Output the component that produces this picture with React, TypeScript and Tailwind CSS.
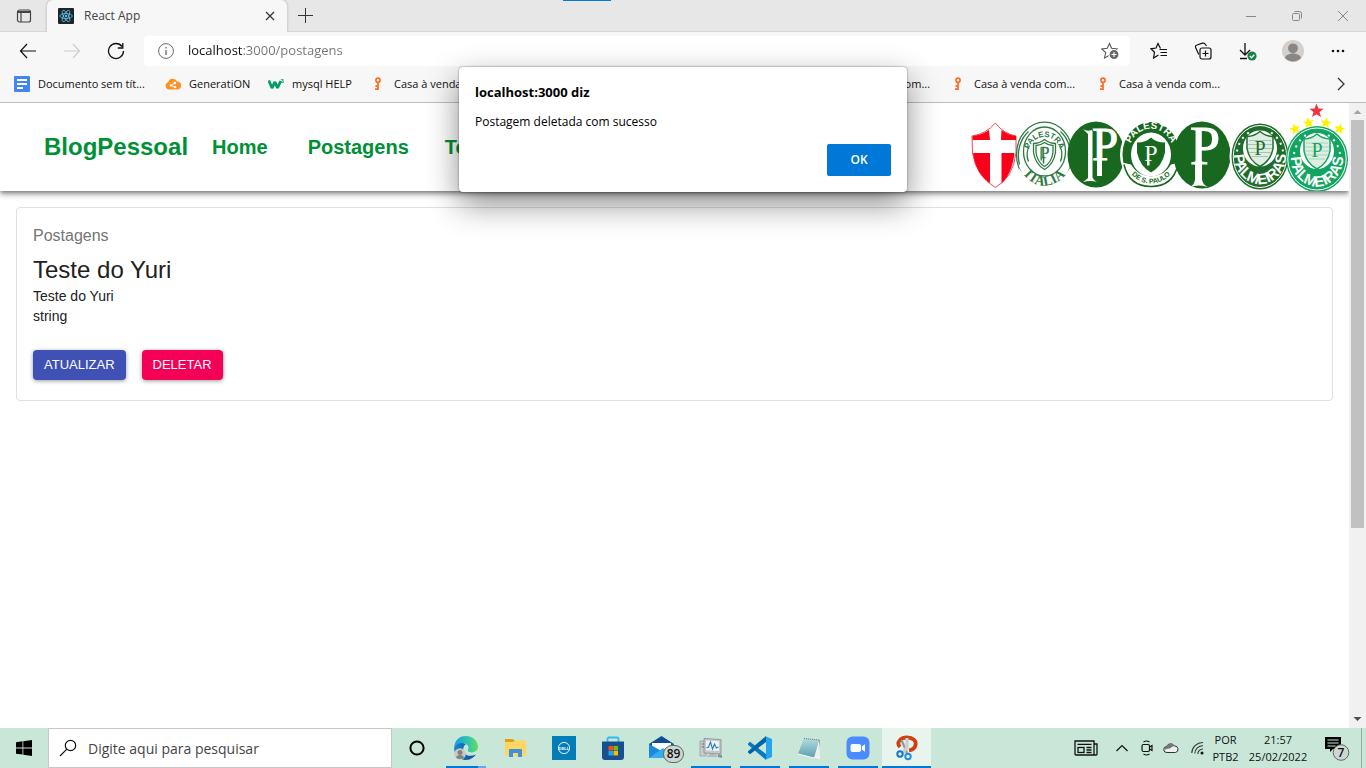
import React from "react";

const ui = "font-['Open_Sans','Noto_Sans',sans-serif]";

function Key() {
  return (
    <svg className="size-4 shrink-0" viewBox="0 0 16 16" fill="none" stroke="#ff6a1f" aria-hidden="true">
      <circle cx="8" cy="4.2" r="2.1" strokeWidth="1.6" />
      <path d="M8 6.4V14M8 10.2H5.4M8 13.2H5" strokeWidth="1.7" />
    </svg>
  );
}

function DocsIcon() {
  return (
    <svg className="size-4 shrink-0" viewBox="0 0 16 16" aria-hidden="true">
      <rect width="16" height="16" rx="1" fill="#4285f4" />
      <path d="M3 4h10M3 8h10M3 12h6" stroke="#fff" strokeWidth="1.8" />
    </svg>
  );
}

function CloudIcon() {
  return (
    <svg className="size-4 shrink-0" viewBox="0 0 16 16" aria-hidden="true">
      <path d="M4 13.5a3.7 3.7 0 0 1-.8-7.2A4.7 4.7 0 0 1 12 5.5a4 4 0 0 1 0 8z" fill="#ff9124" />
      <circle cx="6" cy="9.5" r="1.3" fill="#fff" />
      <circle cx="9.8" cy="7" r="1.3" fill="#fff" />
      <circle cx="10" cy="11" r="1.3" fill="#fff" />
      <path d="M6 9.5L9.8 7M6 9.5l4 1.5" stroke="#fff" strokeWidth=".8" />
    </svg>
  );
}

function W3Icon() {
  return (
    <svg className="size-4 shrink-0" viewBox="0 0 16 16" aria-hidden="true">
      <path d="M.8 4.5L4 12l3-6 2.5 6 3.2-7" fill="none" stroke="#079b69" strokeWidth="2.8" strokeLinejoin="bevel" />
      <text x="12.5" y="6.5" fontSize="6" fontWeight="700" fontFamily="Liberation Sans" fill="#079b69">3</text>
    </svg>
  );
}

const bookmarks = [
  { label: "Documento sem tít...", icon: <DocsIcon />, width: "w-[151px]" },
  { label: "GeneratiON", icon: <CloudIcon />, width: "w-[103px]" },
  { label: "mysql HELP", icon: <W3Icon />, width: "w-[102px]" },
  ...Array.from({ length: 6 }, () => ({ label: "Casa à venda com...", icon: <Key />, width: "w-[145px]" })),
];

function TabStrip() {
  return (
    <div className="relative flex h-8 shrink-0 items-stretch border-b border-[#d6d6d6] bg-[#e7e7e7]">
      <button aria-label="Guias" className="flex w-[47px] items-center justify-center">
        <svg width="16" height="16" viewBox="0 0 16 16" fill="none" stroke="#444" strokeWidth="1.2">
          <rect x="1.5" y="2" width="13" height="12" rx="2" />
          <path d="M1.5 4h13" strokeWidth="2" />
          <path d="M5 4v10" />
        </svg>
      </button>
      <div className="-mb-px flex w-[240px] items-center rounded-t-md bg-[#f7f7f7] pl-[11px] pr-2 shadow-[0_0_3px_rgba(0,0,0,0.25)] [clip-path:inset(-4px_-4px_0_-4px)]">
        <svg width="16" height="16" viewBox="0 0 16 16" fill="none" stroke="#61dafb" strokeWidth=".7" aria-hidden="true">
          <rect width="16" height="16" rx="1" fill="#20232a" stroke="none" />
          <ellipse cx="8" cy="8" rx="6.3" ry="2.5" />
          <ellipse cx="8" cy="8" rx="6.3" ry="2.5" transform="rotate(60 8 8)" />
          <ellipse cx="8" cy="8" rx="6.3" ry="2.5" transform="rotate(120 8 8)" />
          <circle cx="8" cy="8" r=".9" fill="#61dafb" />
        </svg>
        <span className="ml-2.5 flex-1 text-[12px] text-[#444]">React App</span>
        <button aria-label="Fechar guia" className="flex size-[18px] items-center justify-center">
          <svg width="10" height="10" viewBox="0 0 10 10" stroke="#333" strokeWidth="1.2">
            <path d="M1 1l8 8M9 1L1 9" />
          </svg>
        </button>
      </div>
      <button aria-label="Nova guia" className="flex w-9 items-center justify-center">
        <svg width="15" height="15" viewBox="0 0 15 15" stroke="#333" strokeWidth="1">
          <path d="M7.5 0v15M0 7.5h15" />
        </svg>
      </button>
      <div className="flex-1" />
      <button aria-label="Minimizar" className="flex w-[46px] items-center justify-center">
        <svg width="10" height="10" viewBox="0 0 10 10" stroke="#888"><path d="M0 5.5h10" /></svg>
      </button>
      <button aria-label="Restaurar" className="flex w-[46px] items-center justify-center">
        <svg width="10" height="10" viewBox="0 0 10 10" fill="none" stroke="#888">
          <rect x=".5" y="2.5" width="7" height="7" rx="1" />
          <path d="M2.5 .5h5a2 2 0 0 1 2 2v5" />
        </svg>
      </button>
      <button aria-label="Fechar" className="flex w-[46px] items-center justify-center">
        <svg width="10" height="10" viewBox="0 0 10 10" stroke="#888"><path d="M0 0l10 10M10 0L0 10" /></svg>
      </button>
      <div className="absolute left-1/2 top-0 h-px w-12 -translate-x-[120px] bg-[#0078d7]" />
    </div>
  );
}

function ToolButton({ label, className = "w-[45px]", children }: { label: string; className?: string; children: React.ReactNode }) {
  return (
    <button aria-label={label} className={`flex shrink-0 items-center justify-center ${className}`}>
      {children}
    </button>
  );
}

function Toolbar() {
  return (
    <div className="flex h-[38px] shrink-0 items-stretch bg-[#f7f7f7] px-1.5">
      <ToolButton label="Voltar" className="w-11">
        <svg width="18" height="16" viewBox="0 0 18 16" fill="none" stroke="#111" strokeWidth="1.2"><path d="M17 8H1.5M8 1L1.500 8 8 15" /></svg>
      </ToolButton>
      <ToolButton label="Avançar" className="w-11">
        <svg width="18" height="16" viewBox="0 0 18 16" fill="none" stroke="#cdcdcd" strokeWidth="1.2"><path d="M1 8h15.5M10 1l6.5 7-6.5 7" /></svg>
      </ToolButton>
      <ToolButton label="Atualizar página" className="w-11">
        <svg width="18" height="18" viewBox="0 0 18 18" fill="none" stroke="#111" strokeWidth="1.3"><path d="M16.5 9A7.500 7.500 0 1 1 15 4.500M15.800 1v5h-5" /></svg>
      </ToolButton>
      <div className="mx-1.5 my-1 flex min-w-0 flex-1 items-center rounded bg-white pl-3.5 pr-2.5">
        <svg width="16" height="16" viewBox="0 0 16 16" fill="none" stroke="#6b6b6b" aria-hidden="true">
          <circle cx="8" cy="8" r="7.400" /><path d="M8 7v5M8 4v1.500" strokeWidth="1.300" />
        </svg>
        <input
          aria-label="Endereço"
          defaultValue="localhost:3000/postagens"
          className="ml-3.5 min-w-0 flex-1 bg-linear-to-r from-[#111] from-[55px] to-[#737373] to-[55px] bg-clip-text text-[13px] text-transparent outline-none"
        />
        <button aria-label="Adicionar aos favoritos">
          <svg width="19" height="18" viewBox="0 0 19 18" fill="none" stroke="#555" strokeWidth="1.1">
            <path d="M8.500 1.500l2.100 4.800 5.400.6-4 3.600 1.100 5.500-4.600-2.700L3.500 16l1.200-5.500-4-3.600 5.500-.6z" />
            <circle cx="13" cy="12.500" r="5" fill="#666" stroke="#fff" />
            <path d="M10.500 12.500h5M13 10v5" stroke="#fff" />
          </svg>
        </button>
      </div>
      <ToolButton label="Favoritos">
        <svg width="18" height="18" viewBox="0 0 18 18" fill="none" stroke="#111" strokeWidth="1.2">
          <path d="M10.500 6.500L8 1.500 6 6l-5 .8 3.500 3.400L3.600 16 8.500 13M9.500 7.500H17M10.500 10.500H17M10.500 13.500H17" />
        </svg>
      </ToolButton>
      <ToolButton label="Coleções" className="w-11">
        <svg width="18" height="18" viewBox="0 0 18 18" fill="none" stroke="#111" strokeWidth="1.2">
          <rect x="6" y="6" width="11" height="11" rx="2" />
          <path d="M11.500 8.500v6M8.500 11.500h6M4.800 12.500L1.600 5.500Q1 3.500 3 3L8.500 1.200Q10.500.8 11.500 2.500L12.500 4" />
        </svg>
      </ToolButton>
      <ToolButton label="Downloads">
        <svg width="18" height="20" viewBox="0 0 18 20" fill="none" stroke="#111" strokeWidth="1.3">
          <path d="M6 2v12M1 9l5 5 5-5M1 17.500h7" />
          <circle cx="13" cy="15" r="4.600" fill="#168442" stroke="none" />
          <path d="M10.800 15l1.700 1.700 2.800-3" stroke="#fff" />
        </svg>
      </ToolButton>
      <ToolButton label="Perfil">
        <svg width="22" height="22" viewBox="0 0 22 22">
          <circle cx="11" cy="11" r="11" fill="#d3d0cd" />
          <circle cx="11" cy="8.300" r="4.900" fill="#8a8684" />
          <path d="M3 18c1-6 15-6 16 0a11 11 0 0 1-16 0z" fill="#8a8684" />
        </svg>
      </ToolButton>
      <ToolButton label="Mais">
        <svg width="14" height="4" viewBox="0 0 14 4" fill="#111"><circle cx="2" cy="2" r="1.300" /><circle cx="7" cy="2" r="1.300" /><circle cx="12" cy="2" r="1.300" /></svg>
      </ToolButton>
    </div>
  );
}

function BookmarkBar() {
  return (
    <div className="flex shrink-0 items-center border-b border-[#bdbdbd] bg-[#f7f7f7] pb-1 pl-3.5 pr-[21px]">
      <div className="flex h-7 min-w-0 flex-1 items-center overflow-hidden">
        {bookmarks.map((b, i) => (
          <a key={i} href="#" className={`flex shrink-0 items-center gap-2 whitespace-nowrap text-[11px] text-[#111] ${b.width}`}>
            {b.icon}
            {b.label}
          </a>
        ))}
      </div>
      <button aria-label="Mais favoritos">
        <svg width="8" height="14" viewBox="0 0 8 14" fill="none" stroke="#333" strokeWidth="1.3"><path d="M1 1l6 6-6 6" /></svg>
      </button>
    </div>
  );
}

const starPoints = "0,-1 .26,-.33 .95,-.31 .4,.13 .59,.81 0,.42 -.59,.81 -.4,.13 -.95,-.31 -.26,-.33";

function PalmeirasBadge({ x, y, r, color, id }: { x: number; y: number; r: number; color: string; id: string }) {
  return (
    <g transform={`translate(${x} ${y})`}>
      <ellipse rx={r} ry="33" fill={color} />
      <ellipse rx={r - 1.8} ry="31" fill="none" stroke="#fff" strokeWidth="1" />
      <ellipse cy="-8" rx="17" ry="18" fill="#fff" />
      <path d="M-13-20Q-6-20 0-25 6-20 13-20V-8Q11 4 0 10-11 4-13-8z" fill="#dfeee2" stroke={color} strokeWidth="1.5" />
      <path d="M-11-16H11M-12-12H12M-12-8H12M-11-4H11M-8 0H8" stroke={color} strokeWidth=".6" opacity=".5" />
      <text y="-2" textAnchor="middle" fontSize="20" fontFamily="Liberation Serif" fill={color}>P</text>
      <path d="M-23-5A25 27 0 0 1-11-24M11-24A25 27 0 0 1 23-5" fill="none" stroke="#fff" strokeWidth="2" strokeDasharray="2 5" />
      <path id={id} d="M-26-1A26 28.500 0 0 0 26-1" fill="none" />
      <text fontSize="15" fontWeight="700" fontFamily="Liberation Sans" fill="#fff" textAnchor="middle">
        <textPath href={`#${id}`} startOffset="50%">PALMEIRAS</textPath>
      </text>
    </g>
  );
}

function ClubBadges() {
  const dark = "#18691f";
  return (
    <svg className="h-[88px] w-[378px] shrink-0" viewBox="0 0 378 88" role="img" aria-label="Escudos do Palmeiras">
      <g>
        <path d="M1 33Q15 31 24.300 20 33 31 45 33V50Q42 75 24.300 84.500 5 73 1.500 50z" fill="#fff" stroke="#fb4557" strokeWidth="1" />
        <path d="M1.500 33Q11 32 18 27L19 37H1.500zM45 33Q37 32 30.500 27L30 37H45zM2 50H19V80Q5 71 2 50zM30.500 50H43.500Q41 71 30.500 80z" fill="#fb0018" />
      </g>
      <g transform="translate(73.500 51.500)">
        <g fill="none" stroke="#2e7a43" strokeWidth="1.3">
          <ellipse rx="28" ry="32.300" fill="#fff" />
          <ellipse cy="-3" rx="21" ry="24.500" />
          <path d="M-25 10A25 30 0 0 1-16-23M25 10A25 30 0 0 0 16-23M-16 7A17 18 0 0 1-15-9M16 7A17 18 0 0 0 15-9" />
          <path d="M-11-11Q-5-11 0-15 5-11 11-11V-2Q9 10 0 15-9 10-11-2z" />
          <path d="M-8.500-9Q-4-9 0-12 4-9 8.500-9V-2Q7 8 0 12-7 8-8.500-2z" />
        </g>
        <text x="-4" y="3" fontSize="16" fontFamily="Liberation Serif" fill="#2e7a43" stroke="#2e7a43" strokeWidth=".4">P</text>
        <rect x="-4" y="-7" width="1.300" height="13" fill="#2e7a43" />
        <rect x="-1.800" y="2" width="1.600" height="7" fill="#2e7a43" />
        <path id="arc-palestra" d="M-16-4A16.500 18 0 0 1 16-4" fill="none" />
        <text fontSize="8" fontWeight="700" fontFamily="Liberation Sans" fill="#2e7a43" textAnchor="middle"><textPath href="#arc-palestra" startOffset="50%">PALESTRA</textPath></text>
        <path d="M-26 13Q-18 27 0 22 18 27 26 13V17Q18 34 0 34-18 34-25 20z" fill="#fff" />
        <path id="arc-italia" d="M-25 15Q-14 31 0 31 14 31 25 15" fill="none" />
        <text fontSize="14" fontWeight="700" fontFamily="Liberation Serif" fill="#2e7a43" textAnchor="middle"><textPath href="#arc-italia" startOffset="50%">ITALIA</textPath></text>
      </g>
      <g>
        <ellipse cx="125" cy="51.500" rx="28.500" ry="33" fill={dark} />
        <g fill="#fff">
          <text x="121" y="57" fontSize="47" fontFamily="Liberation Serif" stroke="#fff" strokeWidth="1">P</text>
          <rect x="126" y="55" width="5" height="18" />
          <rect x="117" y="28" width="4.500" height="49" />
          <path d="M112 26q4 3 9 1v4h-4zM112 79q3-2 5-4h5q1 3 5 4-8-2-15 0z" />
        </g>
      </g>
      <g transform="translate(180 51.500)">
        <ellipse rx="31" ry="34" fill="#fff" />
        <ellipse rx="28.500" ry="32.500" fill={dark} />
        <path d="M-29 8L-20 10Q-14 21 0 22 14 21 20 10L29 8Q28 30 0 34-28 30-29 8z" fill="#fff" />
        <path d="M-27 10Q-22 32 0 32 22 32 27 10" fill="none" stroke={dark} strokeWidth="1.5" />
        <ellipse rx="20" ry="22" fill="#fff" />
        <path d="M-14-12Q-5-12 0-17 5-12 14-12V-2Q11 12 0 18-11 12-14-2z" fill={dark} />
        <text y="6" textAnchor="middle" fontSize="24" fontFamily="Liberation Serif" fill="#fff">P</text>
        <rect x="-4" y="5" width="2.500" height="6" fill="#fff" />
        <path id="arc-palestra-sp" d="M-22-6A22.500 25 0 0 1 22-6" fill="none" />
        <text fontSize="10" fontWeight="700" fontFamily="Liberation Sans" fill="#fff" textAnchor="middle"><textPath href="#arc-palestra-sp" startOffset="50%">PALESTRA</textPath></text>
        <path id="arc-paulo" d="M-24 14Q-14 29 0 29 14 29 24 14" fill="none" />
        <text fontSize="7" fontWeight="700" fontFamily="Liberation Sans" fill={dark} textAnchor="middle"><textPath href="#arc-paulo" startOffset="50%">DE S. PAULO</textPath></text>
      </g>
      <g>
        <ellipse cx="231" cy="52" rx="28.500" ry="33.500" fill={dark} />
        <g fill="#fff">
          <text x="219" y="61" fontSize="54" fontFamily="Liberation Serif" stroke="#fff" strokeWidth="1">P</text>
          <rect x="224" y="58" width="7" height="21" />
          <path d="M219 84q5-3 5-8h7q0 5 6 8-9-3-18 0z" />
        </g>
      </g>
      <ellipse cx="289" cy="53.500" rx="30.500" ry="34" fill="#fff" />
      <PalmeirasBadge x={289} y={53.5} r={28.5} color="#1e6b2b" id="arc-palmeiras-dark" />
      <PalmeirasBadge x={346} y={56} r={31} color="#12a562" id="arc-palmeiras-light" />
      <polygon points={starPoints} transform="translate(345.500 8) scale(7.500)" fill="#f5333f" />
      <g fill="#fff200">
        <polygon points={starPoints} transform="translate(324 26) rotate(-15) scale(6)" />
        <polygon points={starPoints} transform="translate(337.500 20) rotate(-8) scale(6)" />
        <polygon points={starPoints} transform="translate(355 20) rotate(8) scale(6)" />
        <polygon points={starPoints} transform="translate(368.500 26) rotate(15) scale(6)" />
      </g>
    </svg>
  );
}

function BlogPage() {
  return (
    <div className="min-w-0 flex-1 overflow-hidden bg-white font-['Liberation_Sans',Arial,sans-serif]">
      <header className="flex items-center overflow-hidden bg-white pl-11 shadow-[0_2px_4px_-1px_rgba(0,0,0,0.4),0_4px_5px_rgba(0,0,0,0.2),0_1px_10px_rgba(0,0,0,0.15)]">
        <nav className="flex min-w-0 flex-1 items-center whitespace-nowrap text-[20px] font-bold text-[#009036]">
          <a href="#" className="mr-6 text-[24px]">BlogPessoal</a>
          <a href="#" className="mr-10">Home</a>
          <a href="#" className="mr-9">Postagens</a>
          <a href="#">Temas</a>
        </nav>
        <ClubBadges />
      </header>
      <main className="m-4 rounded border border-[#e0e0e0] px-4 pb-5 pt-4 text-[14px] leading-5 text-[#212121]">
        <p className="mb-1.5 text-[16px] leading-6 text-[#757575]">Postagens</p>
        <h2 className="text-[24px] leading-8">Teste do Yuri</h2>
        <p>Teste do Yuri</p>
        <p>string</p>
        <div className="mt-6 flex gap-4 text-[13px] text-white">
          <button className="h-[30px] rounded bg-[#3f51b5] px-[11px] shadow-[0_1px_4px_rgba(0,0,0,0.4)]">ATUALIZAR</button>
          <button className="h-[30px] rounded bg-[#f50057] px-[11px] shadow-[0_1px_4px_rgba(0,0,0,0.4)]">DELETAR</button>
        </div>
      </main>
    </div>
  );
}

function Scrollbar() {
  return (
    <div className="flex w-[17px] shrink-0 flex-col items-center bg-[#f1f1f1]" aria-hidden="true">
      <svg width="17" height="17" viewBox="0 0 17 17" fill="#a3a3a3"><path d="M4.500 11h8l-4-4z" /></svg>
      <div className="w-full flex-1 px-0.5">
        <div className="h-[69%] w-full bg-[#c1c1c1]" />
      </div>
      <svg width="17" height="17" viewBox="0 0 17 17" fill="#505050"><path d="M4.500 6h8l-4 4z" /></svg>
    </div>
  );
}

function AlertDialog() {
  return (
    <div role="alertdialog" aria-labelledby="alert-title" aria-describedby="alert-message" className="absolute left-1/2 top-[67px] flex w-[448px] -translate-x-1/2 flex-col rounded bg-white px-4 pb-4 pt-[15px] leading-5 text-black shadow-[0_0_2px_rgba(0,0,0,0.5),0_12px_32px_rgba(0,0,0,0.45)]">
      <h1 id="alert-title" className="text-[13px] font-bold">localhost:3000 diz</h1>
      <p id="alert-message" className="mt-2.5 text-[12px]">Postagem deletada com sucesso</p>
      <button className="mt-3 h-8 w-16 self-end rounded-xs bg-[#0078d7] text-[12px] font-semibold text-white">OK</button>
    </div>
  );
}

const apps = [
  {
    name: "Cortana", bar: "",
    icon: <svg width="24" height="24" viewBox="0 0 24 24"><circle cx="12" cy="12" r="6.600" fill="none" stroke="#000" strokeWidth="2" /></svg>,
  },
  {
    name: "Microsoft Edge", bar: "w-10 bg-[#0078d7] border-r-8 border-[#64a8e5]",
    icon: (
      <svg width="26" height="26" viewBox="0 0 26 26">
        <defs>
          <linearGradient id="edge-top" x1="0" x2="1"><stop offset="0" stopColor="#189dda" /><stop offset=".6" stopColor="#30c6b0" /><stop offset="1" stopColor="#6ddc50" /></linearGradient>
          <linearGradient id="edge-low" x1="0" x2="1"><stop offset="0" stopColor="#1986d5" /><stop offset="1" stopColor="#0c4d92" /></linearGradient>
        </defs>
        <path d="M1 13a12 12 0 0 0 22 6.500Q15 23 11 17.500 8.500 12 13 9 4 5 1 13z" fill="url(#edge-low)" />
        <path d="M1 13C2 4 7 1 13 1c7 0 12 5 12 11 0 5-7 7-10 4-1-1 1-2 .5-4C14 7 4 6 1 13z" fill="url(#edge-top)" />
        <circle cx="7" cy="19" r="5.800" fill="#cbc8c6" /><circle cx="7" cy="17.500" r="2.500" fill="#85817f" /><path d="M3 22.500c.5-3.500 7.500-3.500 8 0a6 6 0 0 1-8 0z" fill="#85817f" />
      </svg>
    ),
  },
  {
    name: "Explorador de Arquivos", bar: "",
    icon: (
      <svg width="24" height="24" viewBox="0 0 24 24">
        <path d="M2 3h8l2 2h9v14H2z" fill="#dfa018" /><path d="M2 6h8l2-1.500h11V20H2z" fill="#ffd661" />
        <path d="M6 21v-7q0-1 1-1h11q1 0 1 1v7h-4v-4H10v4z" fill="#3d91db" />
      </svg>
    ),
  },
  {
    name: "Dell", bar: "",
    icon: (
      <svg width="24" height="24" viewBox="0 0 24 24"><rect width="24" height="24" fill="#027db8" /><circle cx="12" cy="12" r="5.600" fill="none" stroke="#fff" strokeWidth=".9" /><text x="12" y="13.500" textAnchor="middle" fontSize="4" fontWeight="700" fontFamily="Liberation Sans" fill="#fff">DELL</text></svg>
    ),
  },
  {
    name: "Microsoft Store", bar: "",
    icon: (
      <svg width="24" height="24" viewBox="0 0 24 24">
        <path d="M6.500 6V3q0-1.500 1.500-1.500h8q1.500 0 1.500 1.500v3" fill="none" stroke="#2bbcf0" strokeWidth="1.800" />
        <path d="M1 5.500h22V21q0 3-3 3H4q-3 0-3-3z" fill="#174f8f" />
        <path d="M7.500 10H12v4.500H7.500z" fill="#f25022" /><path d="M12.500 10H17v4.500h-4.500z" fill="#7fba00" /><path d="M7.500 15H12v4.500H7.500z" fill="#16a8f0" /><path d="M12.500 15H17v4.500h-4.500z" fill="#ffb900" />
      </svg>
    ),
  },
  {
    name: "Email", bar: "",
    icon: (
      <svg className="ml-2" width="36" height="30" viewBox="0 0 36 30">
        <path d="M1 11L13.500 3 26 11v3H1z" fill="#0f4d94" /><path d="M4 10h19v8H4z" fill="#fff" /><path d="M1 11l12.500 7L26 11v14H1z" fill="#1a8ade" /><path d="M1 25l14-10 11 10z" fill="#32adf0" />
        <rect x="15.500" y="12.500" width="20" height="17" rx="8.500" fill="#ccd7d2" stroke="#5d6864" />
        <text x="25.500" y="25" textAnchor="middle" fontSize="12" fontWeight="600" fontFamily="Open Sans" fill="#111">89</text>
      </svg>
    ),
  },
  {
    name: "Monitor de recursos", bar: "w-10 bg-[#0078d7]",
    icon: (
      <svg width="26" height="24" viewBox="0 0 26 24">
        <path d="M2 5h6v15H2z" fill="#c9cdd0" stroke="#888" strokeWidth=".6" /><path d="M3.500 8h3M3.500 11h3" stroke="#777" />
        <path d="M6 2.500l17 1V18l-17-1z" fill="#c4c9cc" stroke="#7a7f82" strokeWidth=".7" /><path d="M8 4.500l13 .8V15l-13-.8z" fill="#eaf4fa" />
        <path d="M8.500 12l2-1 2-5 2 7 2-5 2 4 2-1" fill="none" stroke="#317bb5" strokeWidth="1.1" /><path d="M12 18h6l2 3H8z" fill="#b7bbbd" /><path d="M20 18l4 1v3l-4-1z" fill="#8b9093" />
      </svg>
    ),
  },
  {
    name: "Visual Studio Code", bar: "w-10 bg-[#0078d7]",
    icon: (
      <svg width="24" height="24" viewBox="0 0 24 24">
        <path d="M0 7.500L2 5.800 18 18v6L0 8.800z" fill="#0879be" /><path d="M0 16.500L2 18.200 18 6V0L0 15.200z" fill="#0065a9" /><path d="M17 0l7 3v18l-7 3q1-.5 1-2V2q0-1.500-1-2z" fill="#27a4f0" />
      </svg>
    ),
  },
  {
    name: "Bloco de Notas", bar: "w-10 bg-[#0078d7]",
    icon: (
      <svg width="26" height="24" viewBox="0 0 26 24">
        <defs><linearGradient id="note" x1="0" y1="0" x2="0" y2="1"><stop offset="0" stopColor="#b5dde2" /><stop offset="1" stopColor="#5b9fae" /></linearGradient></defs>
        <path d="M8 3l16 1-2 18-3 1z" fill="#8b8d8e" /><path d="M8 2l15 2-5 18-16-4z" fill="url(#note)" /><path d="M18 22l5-18 1 18z" fill="#eceff0" /><path d="M8 2.500l15 1.500" stroke="#777" strokeDasharray="1 1" /><path d="M2 18l16 4h6" fill="none" stroke="#fff" />
      </svg>
    ),
  },
  {
    name: "Zoom", bar: "w-10 bg-[#0078d7]",
    icon: (
      <svg width="24" height="24" viewBox="0 0 24 24"><rect x=".5" y=".5" width="23" height="23" rx="6" fill="#4a8cff" /><rect x="4.500" y="8" width="10.500" height="8" rx="2" fill="#fff" /><path d="M15.800 10.500L19 8.200v7.600l-3.200-2.300z" fill="#fff" /></svg>
    ),
  },
  {
    name: "Ferramenta de Captura", bar: "w-full bg-[#0078d7]", active: true,
    icon: (
      <svg width="24" height="26" viewBox="0 0 24 26" fill="none">
        <path d="M5 12C1 8 5 2.500 12 2.500c6 0 9.500 3 8.500 7.500-.8 3.500-3.500 5-6.500 5.500" stroke="#cf4210" strokeWidth="3.800" />
        <path d="M6.500 5l5.500 13" stroke="#8f979c" strokeWidth="2.200" /><path d="M12 3v9L8 18" stroke="#c9ced1" strokeWidth="3.200" />
        <circle cx="5" cy="19" r="2.700" stroke="#1676c8" strokeWidth="2" /><circle cx="13" cy="21.500" r="2.700" stroke="#2390df" strokeWidth="2" />
      </svg>
    ),
  },
];

function Taskbar() {
  return (
    <footer className="flex h-10 shrink-0 items-stretch bg-[#c9e7d9] text-[#111]">
      <button aria-label="Iniciar" className="flex w-12 items-center justify-center">
        <svg width="16" height="16" viewBox="0 0 16 16" fill="#000"><path d="M0 2.200L6.500 1.300v6.200H0zM7.300 1.200L16 0v7.500H7.300zM0 8.400h6.500v6.200L0 13.700zM7.300 8.400H16V16l-8.700-1.200z" /></svg>
      </button>
      <label className="flex w-[344px] shrink-0 items-center border border-[#c6c6c6] bg-white pl-2.5">
        <svg width="18" height="18" viewBox="0 0 18 18" fill="none" stroke="#111" strokeWidth="1.2" aria-hidden="true"><circle cx="11.500" cy="6.500" r="5.200" /><path d="M7.800 10.200L1 17" /></svg>
        <input aria-label="Pesquisar" placeholder="Digite aqui para pesquisar" className="ml-[11px] min-w-0 flex-1 text-[14px] outline-none placeholder:text-[#444]" />
      </label>
      {apps.map((a) => (
        <button key={a.name} aria-label={a.name} className={`flex w-[49px] shrink-0 flex-col items-center ${a.active ? "bg-[#e8f4ee]" : ""}`}>
          <span className="flex min-h-0 flex-1 items-center pt-0.5">{a.icon}</span>
          <span className={`h-0.5 ${a.bar}`} />
        </button>
      ))}
      <div className="flex-1" />
      <div className="flex items-center pr-1">
        <svg className="mr-[18px]" width="24" height="16" viewBox="0 0 24 16" fill="none" stroke="#111" strokeWidth="1.3">
          <path d="M1 1h19v14H2q-1 0-1-1zM20 4h3v10q0 1-1 1h-2M3.500 4.300h14M12.500 7.500h5M12.500 10h5M12.500 12.500h5" /><rect x="4" y="7.500" width="6" height="5" />
        </svg>
        <svg className="mr-[13px]" width="12" height="8" viewBox="0 0 12 8" fill="none" stroke="#111" strokeWidth="1.2"><path d="M.5 7L6 1.500 11.500 7" /></svg>
        <svg className="mr-2.5" width="12" height="16" viewBox="0 0 12 16" fill="none" stroke="#111" strokeWidth="1.2"><rect x="1" y="4.500" width="7.500" height="7" rx="1.500" /><path d="M8.500 7l2.500-1.500v5L8.500 9M2.500 2Q5.500 0 8.500 2M2.500 14Q5.500 16 8.500 14" /></svg>
        <svg className="mr-3" width="16" height="12" viewBox="0 0 16 12"><path d="M4 10.500a3 3 0 0 1-.5-6A4.500 4.500 0 0 1 11.500 4a3.300 3.300 0 0 1 1 6.500z" fill="#eee" stroke="#333" /><path d="M1.500 8a3 3 0 0 1 2-3.500A4.500 4.500 0 0 1 11.500 4Q8 4.500 7 6.500 4 6 1.500 8z" fill="#777" /></svg>
        <svg className="mr-2" width="13" height="14" viewBox="0 0 13 14" fill="none" stroke="#333" strokeWidth="1.1"><path d="M.8 12A11 11 0 0 1 12 1.500M3.800 12.500A8 8 0 0 1 12 4.800M6.800 13A5 5 0 0 1 12 8" /><circle cx="11" cy="12" r="1.500" fill="#111" stroke="none" /></svg>
        <div className="w-[27px] text-center text-[11px] leading-[17px]"><p>POR</p><p>PTB2</p></div>
        <div className="ml-2 w-[62px] text-center text-[11px] leading-[17px]"><p>21:57</p><p>25/02/2022</p></div>
        <button aria-label="7 notificações" className="ml-4">
          <svg width="26" height="26" viewBox="0 0 26 26">
            <path d="M0 2h16v12H8l-3 3v-3H0z" fill="#000" /><path d="M2.500 5h11M2.500 8h11M2.500 11h8" stroke="#c9e7d9" />
            <circle cx="16" cy="17.500" r="7.800" fill="#cdd6d2" stroke="#606a66" /><text x="16" y="22" textAnchor="middle" fontSize="12" fontWeight="600" fontFamily="Open Sans" fill="#111">7</text>
          </svg>
        </button>
        <span className="ml-2.5 h-10 w-px bg-[#93aba0]" />
      </div>
    </footer>
  );
}

export default function App() {
  return (
    <div className={`relative flex h-screen flex-col overflow-hidden ${ui}`}>
      <TabStrip />
      <Toolbar />
      <BookmarkBar />
      <div className="flex min-h-0 flex-1">
        <BlogPage />
        <Scrollbar />
      </div>
      <Taskbar />
      <AlertDialog />
    </div>
  );
}
